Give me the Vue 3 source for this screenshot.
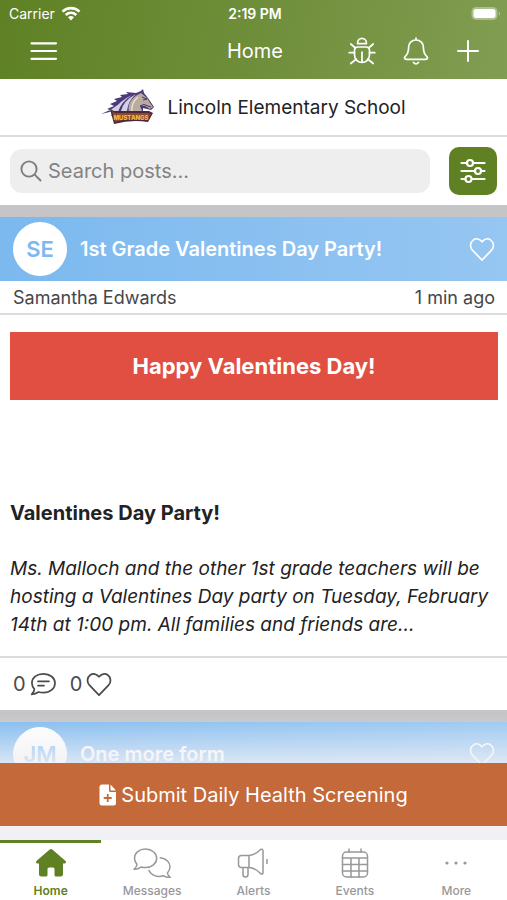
<script setup>
import { ref } from 'vue';

const search = ref('');
const activeTab = ref('Home');
const tabs = ['Home', 'Messages', 'Alerts', 'Events', 'More'];

const heart = 'M14 25 3.6 14.2C.6 11 1 5.900 4.500 3.300 7.600 1 11.400 2.200 14 5.200 16.600 2.200 20.400 1 23.500 3.300 27 5.900 27.400 11 24.400 14.200Z';
</script>

<template>
  <div class="app">
    <header class="top-bar">
      <div class="status">
        <div class="carrier">
          <span>Carrier</span>
          <svg width="20" height="16" viewBox="0 0 20 16" fill="none" stroke="#fff" stroke-width="2.600">
            <path d="M1.500 5.600C6.300 1 13.700 1 18.500 5.600" />
            <path d="M4.700 9C7.800 6.200 12.200 6.200 15.300 9" />
            <path d="M7 11.200Q10 9 13 11.200L10 14.600Z" fill="#fff" stroke="none" />
          </svg>
        </div>
        <span class="time">2:19 PM</span>
        <svg class="battery" width="30" height="16" viewBox="0 0 30 16">
          <rect x="0.500" y="1" width="26" height="13" rx="4.500" fill="#fff" opacity="0.350" />
          <rect x="2.500" y="3" width="22" height="9" rx="2.500" fill="#fff" />
          <path d="M28 5.500Q30 7.500 28 9.500Z" fill="#fff" opacity="0.500" />
        </svg>
      </div>
      <nav class="nav">
        <button class="icon-button menu" aria-label="Menu">
          <svg width="28" height="20" viewBox="0 0 28 20" stroke="#fff" stroke-width="2.200" stroke-linecap="round">
            <path d="M1.500 2.300H26M1.500 10H26M1.500 17.800H26" />
          </svg>
        </button>
        <h1>Home</h1>
        <div class="actions">
          <button class="icon-button" aria-label="Report a bug">
            <svg width="28" height="28" viewBox="0 0 28 28" fill="none" stroke="#fff" stroke-width="1.700" stroke-linecap="round" stroke-linejoin="round">
              <path d="M9.600 6.700V5.800A4.400 4.400 0 0 1 18.400 5.800V6.700Z" />
              <path d="M10 10H18Q21.500 10 21.500 13.500V18A7.500 7.500 0 0 1 6.500 18V13.500Q6.500 10 10 10ZM14 15V25.500" />
              <path d="M1.200 15.700H6.500M21.500 15.700H26.800M2.800 7 7.400 11M25.200 7 20.600 11M2.800 26.500 8.300 22M25.200 26.500 19.700 22" />
            </svg>
          </button>
          <button class="icon-button" aria-label="Notifications">
            <svg width="26" height="28" viewBox="0 0 26 28" fill="none" stroke="#fff" stroke-width="1.700" stroke-linecap="round" stroke-linejoin="round">
              <path d="M13 1V3M13 3C8.500 3 5.600 6.300 5.600 10.500C5.600 15.500 4.600 17.200 2.300 19.300C.7 21 1.700 22.300 3.300 22.300H22.700C24.300 22.300 25.300 21 23.700 19.300C21.400 17.200 20.400 15.500 20.400 10.500C20.400 6.300 17.500 3 13 3Z" />
              <path d="M10.500 25.500Q13 28.300 15.500 25.500" />
            </svg>
          </button>
          <button class="icon-button" aria-label="New post">
            <svg width="24" height="24" viewBox="0 0 24 24" stroke="#fff" stroke-width="2" stroke-linecap="round">
              <path d="M12 2V22M2 12H22" />
            </svg>
          </button>
        </div>
      </nav>
    </header>

    <section class="school">
      <svg width="54" height="36" viewBox="0 0 54 36" role="img" aria-label="Mustangs">
        <path d="M0 25 9 21 6 20 13 17 9 15 16 12 13 10 21 8 19 6 27 5 25 3 35 4 40 2 42 0 43 4 47 9 51 15 53 18 50 21 46 20 42 19 42 25 10 27 13 22Z" fill="#4c397b" />
        <path d="M28 23C26 16 30 8 40 4L46 9 49 14 52 18 49 20 44 17 39 17 42 24Z" fill="#b9ac9f" />
        <path d="M11 23Q18 12 31 6Q20 13 17 23ZM20 22Q22 12 35 5Q27 12 26 22ZM8 22 18 15 12 23Z" fill="#d5cfe3" />
        <path d="M41 8 46 10 42 11M39 17Q43 14 47 17L50 18" fill="none" stroke="#42345f" stroke-width="1" />
        <path d="M31 22Q30 14 37 8" fill="none" stroke="#e7dfd5" stroke-width="1.500" />
        <path d="M9 20 13 22 48 22 52 24 47 33Q31 30 13 35Z" fill="#49283f" />
        <path d="M11 22 14 24H47L50 25 46 31Q30 28 14 33Z" fill="#8c4a25" />
        <text x="30" y="31" text-anchor="middle" class="logo-text">MUSTANGS</text>
      </svg>
      <span>Lincoln Elementary School</span>
    </section>

    <form class="search" @submit.prevent>
      <label class="search-box">
        <svg width="22" height="22" viewBox="0 0 22 22" fill="none" stroke="#7d7d7f" stroke-width="1.900" stroke-linecap="round">
          <circle cx="9" cy="9" r="7.600" />
          <path d="M14.700 14.700 20.500 20.500" />
        </svg>
        <input v-model="search" type="text" placeholder="Search posts..." aria-label="Search posts" />
      </label>
      <button class="filter" type="button" aria-label="Filter posts">
        <svg width="26" height="26" viewBox="0 0 26 26" fill="#5f8124" stroke="#fff" stroke-width="2.200" stroke-linecap="round">
          <path d="M1.500 5H24.500M1.500 13H24.500M1.500 21H24.500" />
          <circle cx="10" cy="5" r="3" />
          <circle cx="18" cy="13" r="3" />
          <circle cx="8.500" cy="21" r="3" />
        </svg>
      </button>
    </form>

    <main class="feed">
      <article>
        <div class="post-header">
          <span class="avatar">SE</span>
          <h2>1st Grade Valentines Day Party!</h2>
          <button class="icon-button" aria-label="Like">
            <svg width="26" height="24" viewBox="0 0 28 26" fill="none" stroke="#fff" stroke-width="1.800" stroke-linejoin="round"><path :d="heart" /></svg>
          </button>
        </div>
        <div class="meta">
          <span>Samantha Edwards</span>
          <span>1 min ago</span>
        </div>
        <div class="post-body">
          <div class="callout">Happy Valentines Day!</div>
          <h3>Valentines Day Party!</h3>
          <p>Ms. Malloch and the other 1st grade teachers will be hosting a Valentines Day party on Tuesday, February 14th at 1:00 pm. All families and friends are...</p>
        </div>
        <div class="counts">
          <button class="count" aria-label="Comments">
            <span>0</span>
            <svg width="26" height="24" viewBox="0 0 26 24" fill="none" stroke="#4b4b4d" stroke-width="1.700" stroke-linecap="round" stroke-linejoin="round">
              <path d="M13.500 1.800C6.900 1.800 1.900 5.800 1.900 11C1.900 13.500 2.800 15.500 4.400 17.100C4.300 19.200 3 21 1.700 22.300C4.600 22.300 7 21.200 8.600 20C10.100 20.500 11.700 20.700 13.500 20.700C20 20.700 25 16.500 25 11.200C25 5.900 20 1.800 13.500 1.800Z" />
              <path d="M8 9.300H19M8 13.600H14" />
            </svg>
          </button>
          <button class="count" aria-label="Likes">
            <span>0</span>
            <svg width="26" height="24" viewBox="0 0 28 26" fill="none" stroke="#4b4b4d" stroke-width="1.900" stroke-linejoin="round"><path :d="heart" /></svg>
          </button>
        </div>
      </article>
      <article>
        <div class="post-header">
          <span class="avatar">JM</span>
          <h2>One more form</h2>
          <button class="icon-button" aria-label="Like">
            <svg width="26" height="24" viewBox="0 0 28 26" fill="none" stroke="#fff" stroke-width="1.800" stroke-linejoin="round"><path :d="heart" /></svg>
          </button>
        </div>
      </article>
    </main>

    <button class="screening">
      <svg width="18" height="22" viewBox="0 0 18 22">
        <path d="M3 .5H10V6.500Q10 8 11.500 8H17V19Q17 21.500 14.500 21.500H3Q.5 21.500 .5 19V3Q.5 .5 3 .5ZM11.500 .5 17 6.500H11.500Z" fill="#fff" />
        <path d="M8.700 10V18M4.700 14H12.700" stroke="#c4693a" stroke-width="1.800" />
      </svg>
      <span>Submit Daily Health Screening</span>
    </button>

    <nav class="tabs">
      <button
        v-for="tab in tabs"
        :key="tab"
        class="tab"
        :class="{ active: tab === activeTab }"
        @click="activeTab = tab"
      >
        <svg v-if="tab === 'Home'" width="32" height="30" viewBox="0 0 32 30" fill="currentColor">
          <path d="M14.700 1.600Q16 .6 17.300 1.600L30.600 13Q31.900 14.700 30 15.500H28V26Q28 28.500 25.500 28.500H21Q19.500 28.500 19.500 27V21Q19.500 19.500 18 19.500H14Q12.500 19.500 12.500 21V27Q12.500 28.500 11 28.500H6.500Q4 28.500 4 26V15.500H2Q.1 14.700 1.400 13Z" />
        </svg>
        <svg v-else-if="tab === 'Messages'" width="38" height="30" viewBox="0 0 38 30" fill="none" stroke="currentColor" stroke-width="1.500" stroke-linecap="round" stroke-linejoin="round">
          <path d="M12.500 1C6.300 1 1.500 4.900 1.500 10C1.500 12.400 2.400 14.500 4 16.200C3.800 18.400 2.500 20 1 21.300C3.700 21.500 6.300 20.400 8 19C9.500 19.400 11 19.600 12.500 19.600C18.800 19.600 23.700 15.400 23.700 10.300S18.800 1 12.500 1Z" />
          <path d="M27.300 9.700C33 10.400 37 14 37 18.800C37 21.500 36 23.400 34.400 25C34.600 27 36 28.300 37.200 29.500C34.300 29.700 32 28.800 30.300 27.700C24 29.700 18 27.200 16 22.500" />
        </svg>
        <svg v-else-if="tab === 'Alerts'" width="32" height="30" viewBox="0 0 32 30" fill="none" stroke="currentColor" stroke-width="1.500" stroke-linecap="round" stroke-linejoin="round">
          <path d="M12 7.500H4.500Q1.500 7.500 1.500 10.500V16.500Q1.500 19.500 4.500 19.500H12M12 7.500V19.500M12 7.500C17 7.300 20.500 4.600 23.500 1.500Q26 .4 26 3V24.500Q26 27 23.500 25.500C20.500 22.400 17 19.700 12 19.500M6 19.500V26.500Q6 29 8.500 29T11 26.500V19.500M30 11.500V15.500" />
        </svg>
        <svg v-else-if="tab === 'Events'" width="28" height="30" viewBox="0 0 28 30" fill="none" stroke="currentColor" stroke-width="1.500" stroke-linecap="round">
          <rect x="1.500" y="4" width="25" height="25" rx="4" />
          <path d="M8 1V4M20 1V4M1.500 10H26.500M1.500 16.500H26.500M1.500 23H26.500M10 10V29M18 10V29" />
        </svg>
        <svg v-else width="26" height="30" viewBox="0 0 26 30" fill="currentColor">
          <circle cx="4" cy="15" r="1.600" />
          <circle cx="13" cy="15" r="1.600" />
          <circle cx="22" cy="15" r="1.600" />
        </svg>
        <span>{{ tab }}</span>
      </button>
    </nav>
  </div>
</template>

<style>
body {
  margin: 0;
}
</style>

<style scoped>
.app {
  display: flex;
  flex-direction: column;
  height: 100vh;
  overflow: hidden;
  background: #f0f0f5;
  color: #222224;
  font-family: Inter, "Liberation Sans", sans-serif;
  font-size: 20px;
}
.app * {
  box-sizing: border-box;
}
button {
  padding: 0;
  border: 0;
  background: none;
  color: inherit;
  font: inherit;
}
svg {
  display: block;
  flex-shrink: 0;
}
h1,
h2,
h3,
p {
  margin: 0;
}
.top-bar {
  flex-shrink: 0;
  padding-bottom: 4px;
  background: linear-gradient(100deg, #5f8124, #6f8e3a 50%, #819d52);
  color: #fff;
}
.status {
  display: grid;
  grid-template-columns: 1fr auto 1fr;
  align-items: center;
  height: 27px;
  padding: 0 6px 0 9px;
  font-size: 14px;
}
.carrier {
  display: flex;
  align-items: center;
  gap: 6px;
}
.time {
  font-weight: 600;
}
.battery {
  justify-self: end;
}
.nav {
  display: grid;
  grid-template-columns: 1fr auto 1fr;
  align-items: center;
  height: 48px;
  padding: 0 27px 0 30px;
}
.nav h1 {
  font-size: 20px;
  font-weight: 400;
}
.menu {
  justify-self: start;
}
.actions {
  display: flex;
  align-items: center;
  justify-content: flex-end;
  gap: 27px;
}
.school {
  display: flex;
  flex-shrink: 0;
  align-items: center;
  justify-content: center;
  gap: 12px;
  height: 58px;
  border-bottom: 2px solid #dcdcde;
  background: #fff;
  font-size: 19px;
}
.logo-text {
  fill: #f2bd4b;
  font-size: 6px;
  font-weight: 800;
}
.search {
  display: flex;
  flex-shrink: 0;
  align-items: center;
  gap: 19px;
  height: 68px;
  padding: 0 10px;
  background: #fff;
}
.search-box {
  display: flex;
  flex: 1;
  align-items: center;
  gap: 6px;
  min-width: 0;
  height: 44px;
  padding: 0 10px;
  border-radius: 12px;
  background: #eeeeef;
}
.search-box input {
  flex: 1;
  min-width: 0;
  padding: 0;
  border: 0;
  outline: 0;
  background: none;
  color: #222224;
  font: inherit;
}
.search-box input::placeholder {
  color: #838385;
  opacity: 1;
}
.filter {
  display: grid;
  place-items: center;
  width: 48px;
  height: 48px;
  border-radius: 10px;
  background: #5f8124;
}
.feed {
  position: relative;
  flex: 1;
  min-height: 0;
  overflow: hidden;
}
/* fades the feed out behind the screening button */
.feed::after {
  content: "";
  position: absolute;
  right: 0;
  bottom: 0;
  left: 0;
  height: 48px;
  background: linear-gradient(rgba(240, 240, 245, 0), rgba(240, 240, 245, 0.800));
  pointer-events: none;
}
article {
  border-top: 12px solid #c5c4c6;
  background: #fff;
}
.post-header {
  display: flex;
  align-items: center;
  gap: 13px;
  height: 64px;
  padding: 0 12px 0 13px;
  background: linear-gradient(90deg, #7cb9ef, #96c6f2);
  color: #fff;
}
.avatar {
  display: grid;
  place-items: center;
  width: 54px;
  height: 54px;
  border-radius: 50%;
  background: #fff;
  color: #7cb9ef;
  font-size: 22px;
  font-weight: 600;
}
.post-header h2 {
  flex: 1;
  font-size: 20px;
  font-weight: 600;
}
.meta {
  display: flex;
  align-items: center;
  justify-content: space-between;
  height: 34px;
  padding: 0 12px 0 13px;
  border-bottom: 2px solid #dcdcde;
  color: #464648;
  font-size: 18px;
}
.post-body {
  padding: 17px 9px 17px 10px;
}
.callout {
  display: grid;
  place-items: center;
  height: 68px;
  background: #e14f43;
  color: #fff;
  font-size: 22px;
  font-weight: 700;
}
.post-body h3 {
  margin: 99px 0 28px;
  font-size: 20px;
  font-weight: 700;
  line-height: 28px;
}
.post-body p {
  font-size: 19px;
  font-style: italic;
  line-height: 28px;
}
.counts {
  display: flex;
  align-items: center;
  gap: 14px;
  height: 54px;
  padding: 0 13px;
  border-top: 2px solid #dcdcde;
  color: #4b4b4d;
}
.count {
  display: flex;
  align-items: center;
  gap: 4px;
}
.screening {
  display: flex;
  flex-shrink: 0;
  align-items: center;
  justify-content: center;
  gap: 4px;
  height: 63px;
  margin-bottom: 14px;
  background: #c4693a;
  color: #fff;
}
.tabs {
  display: grid;
  flex-shrink: 0;
  grid-template-columns: repeat(5, 1fr);
  height: 60px;
  background: #fff;
}
.tab {
  display: flex;
  flex-direction: column;
  align-items: center;
  gap: 5px;
  padding-top: 5px;
  border-top: 3px solid transparent;
  color: #98989a;
  font-size: 12px;
  font-weight: 500;
  line-height: 16px;
}
.tab.active {
  border-top-color: #5f8124;
  color: #5f8124;
  font-weight: 600;
}
</style>
